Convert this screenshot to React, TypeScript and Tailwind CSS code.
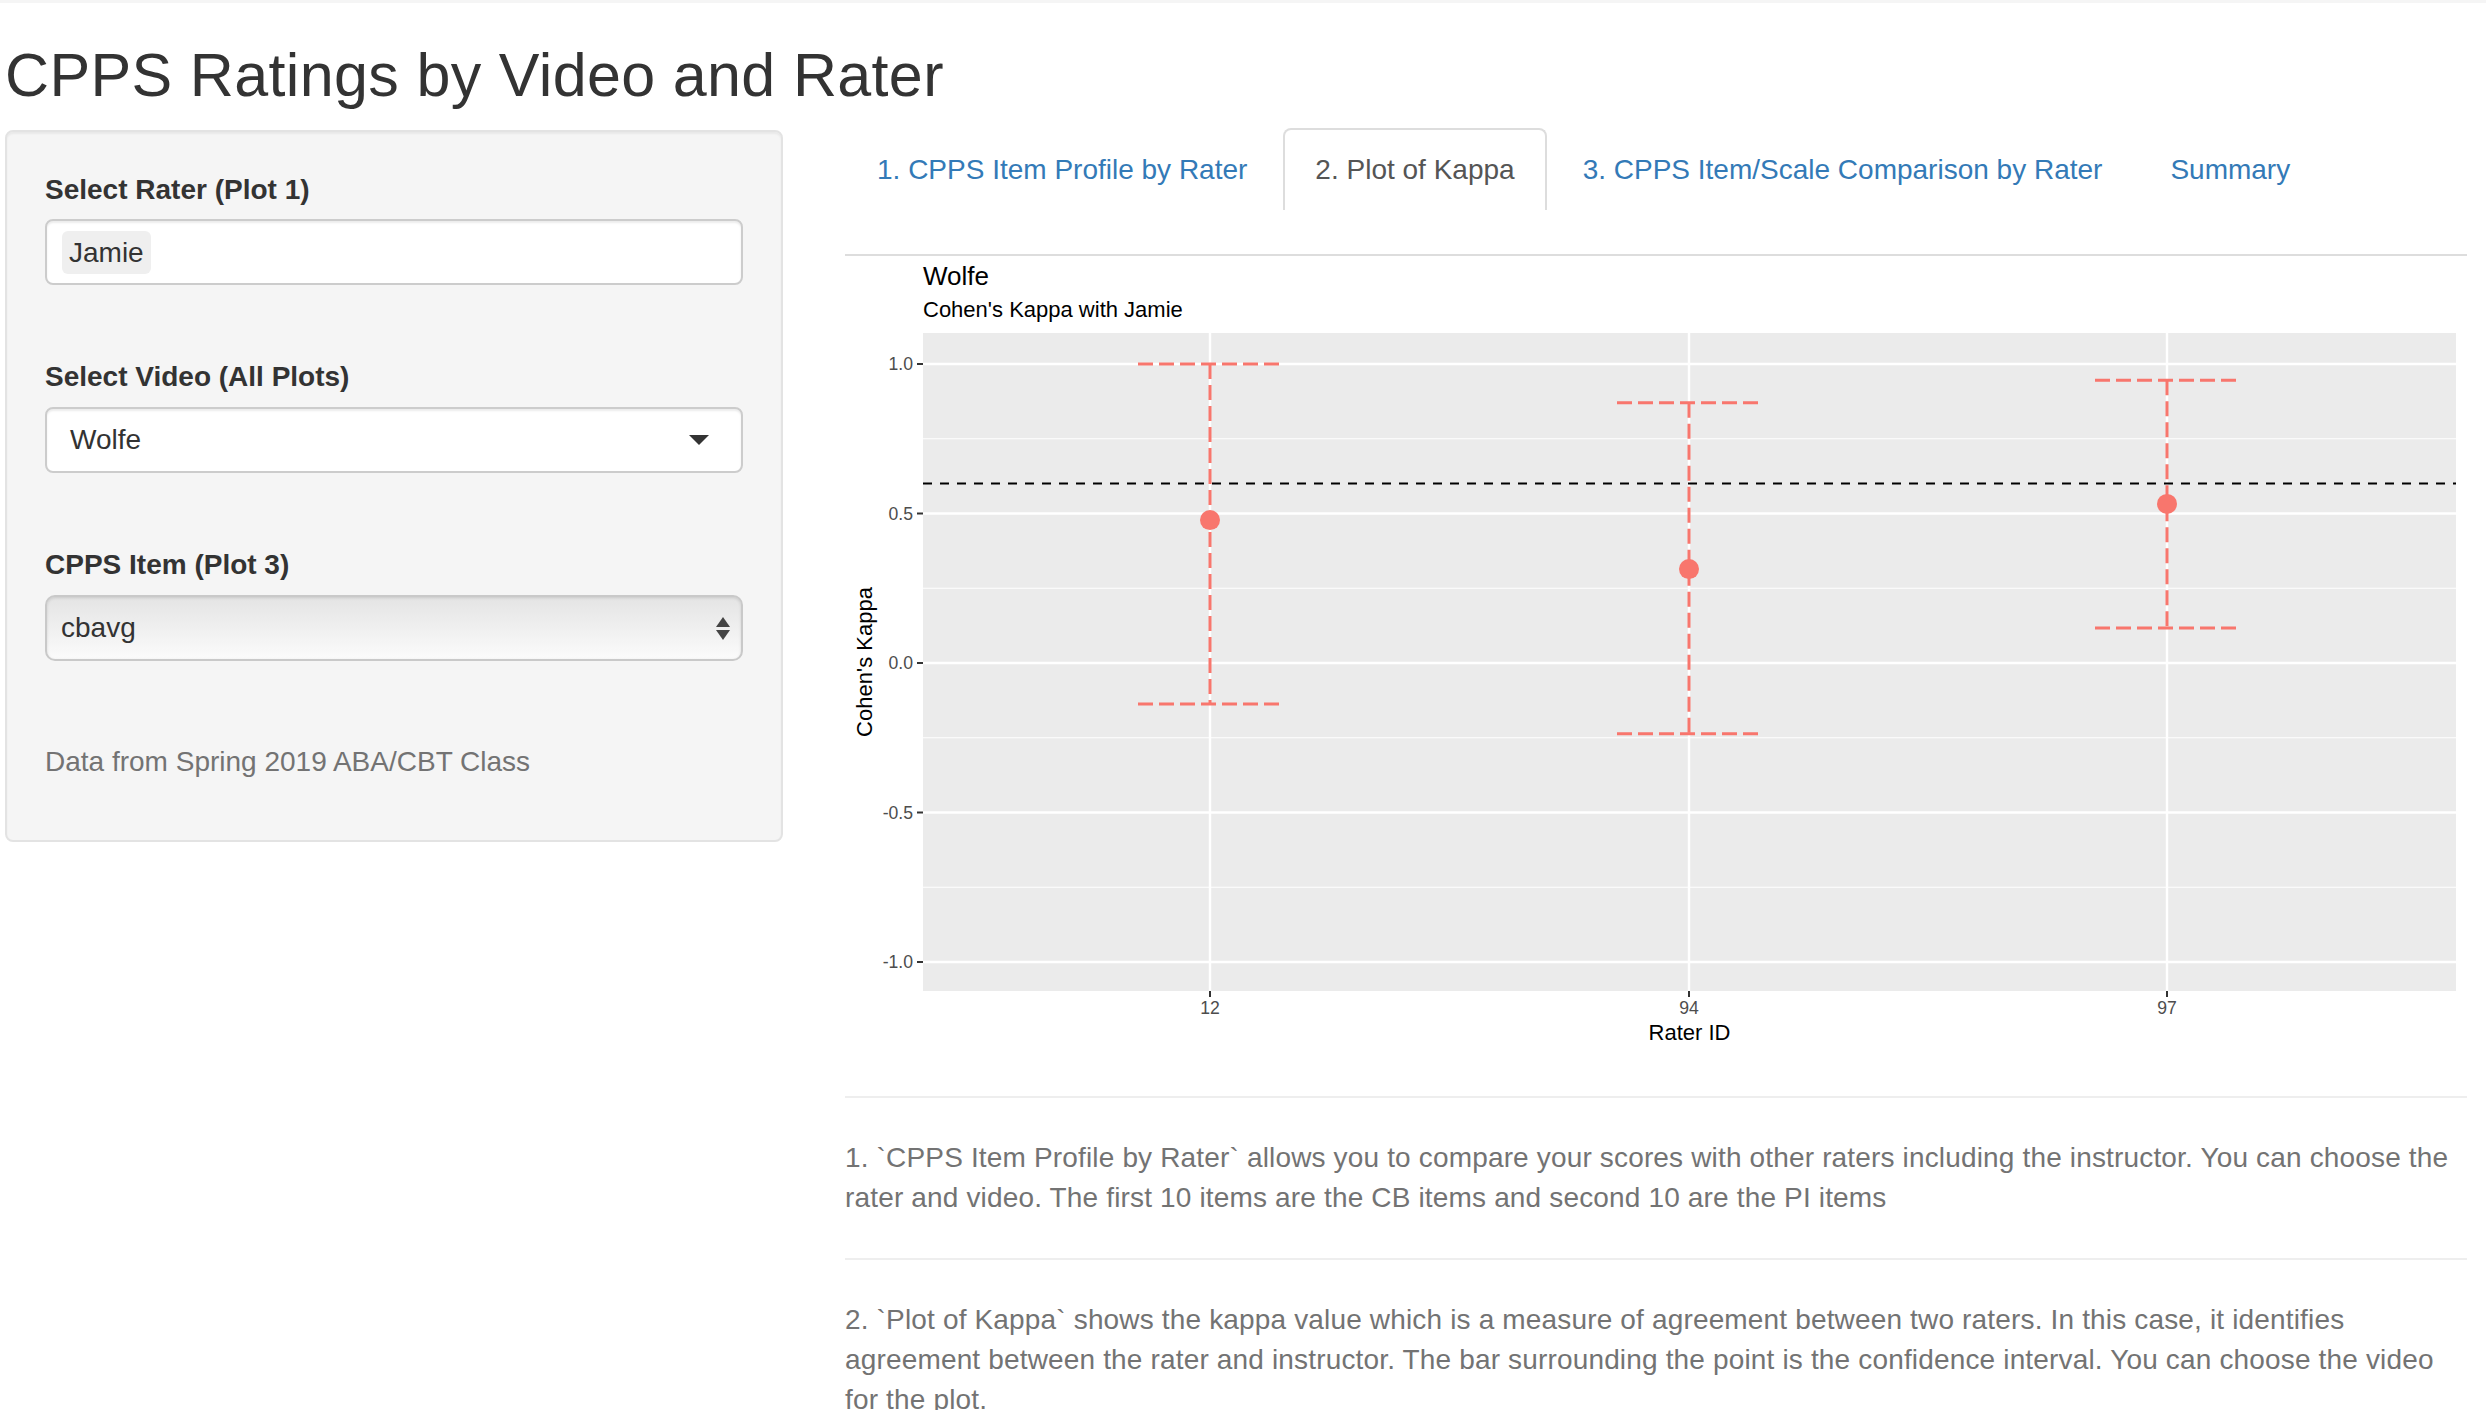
const RED = "#F8766D";

// kappa per rater, with confidence interval
const raters = [
  { id: "12", x: 365, lo: -0.137, est: 0.478, hi: 1.0 },
  { id: "94", x: 844, lo: -0.237, est: 0.314, hi: 0.87 },
  { id: "97", x: 1322, lo: 0.117, est: 0.532, hi: 0.946 },
];

const yv = (v: number) => 405 - 299 * v;
const FONT = "Liberation Sans, Arial, sans-serif";

function KappaPlot() {
  const left = 78;
  const right = 1611;
  const major = [1, 0.5, 0, -0.5, -1];
  const minor = [0.75, 0.25, -0.25, -0.75];
  return (
    <svg width="1622" height="800" viewBox="0 0 1622 800" className="block">
      <text x={left} y={27} fontSize="26" fontFamily={FONT} fill="#000">
        Wolfe
      </text>
      <text x={left} y={59} fontSize="22" fontFamily={FONT} fill="#000">
        Cohen's Kappa with Jamie
      </text>
      <rect x={left} y={75} width={right - left} height={658} fill="#ebebeb" />
      {minor.map((v) => (
        <line key={"mi" + v} x1={left} x2={right} y1={yv(v)} y2={yv(v)} stroke="#fff" strokeWidth="1.2" />
      ))}
      {major.map((v) => (
        <line key={"ma" + v} x1={left} x2={right} y1={yv(v)} y2={yv(v)} stroke="#fff" strokeWidth="2.4" />
      ))}
      {raters.map((r) => (
        <line key={"v" + r.id} x1={r.x} x2={r.x} y1={75} y2={733} stroke="#fff" strokeWidth="2.4" />
      ))}
      <line x1={left} x2={right} y1={yv(0.6)} y2={yv(0.6)} stroke="#000" strokeWidth="2" strokeDasharray="9 8" />
      {raters.map((r) => (
        <g key={"e" + r.id} stroke={RED} strokeWidth="3" strokeDasharray="15 6" fill="none">
          <line x1={r.x - 72} x2={r.x + 72} y1={yv(r.hi)} y2={yv(r.hi)} />
          <line x1={r.x - 72} x2={r.x + 72} y1={yv(r.lo)} y2={yv(r.lo)} />
          <line x1={r.x} x2={r.x} y1={yv(r.hi)} y2={yv(r.lo)} />
        </g>
      ))}
      {raters.map((r) => (
        <circle key={"p" + r.id} cx={r.x} cy={yv(r.est)} r="10" fill={RED} />
      ))}
      {major.map((v) => (
        <g key={"t" + v}>
          <line x1={72} x2={78} y1={yv(v)} y2={yv(v)} stroke="#333" strokeWidth="2" />
          <text x={68} y={yv(v) + 6} textAnchor="end" fontSize="17.6" fontFamily={FONT} fill="#4d4d4d">
            {v.toFixed(1)}
          </text>
        </g>
      ))}
      {raters.map((r) => (
        <g key={"xt" + r.id}>
          <line x1={r.x} x2={r.x} y1={733} y2={739} stroke="#333" strokeWidth="2" />
          <text x={r.x} y={756} textAnchor="middle" fontSize="17.6" fontFamily={FONT} fill="#4d4d4d">
            {r.id}
          </text>
        </g>
      ))}
      <text x={(left + right) / 2} y={782} textAnchor="middle" fontSize="22" fontFamily={FONT} fill="#000">
        Rater ID
      </text>
      <text
        x={27}
        y={404}
        textAnchor="middle"
        fontSize="22"
        fontFamily={FONT}
        fill="#000"
        transform="rotate(-90 27 404)"
      >
        Cohen's Kappa
      </text>
    </svg>
  );
}

function Sidebar() {
  return (
    <div className="mt-[2px] w-[778px] shrink-0 rounded-[8px] border-2 border-[#e3e3e3] bg-[#f5f5f5] p-[38px] shadow-[inset_0_2px_2px_rgba(0,0,0,0.05)]">
      <div className="mb-[9px] text-[28px] font-bold leading-[40px] text-[#333]">Select Rater (Plot 1)</div>
      <div className="flex h-[66px] items-center rounded-[8px] border-2 border-[#cccccc] bg-white pl-[15px] shadow-[inset_0_2px_2px_rgba(0,0,0,0.08)]">
        <span className="rounded-[6px] bg-[#efefef] px-[7px] text-[28px] leading-[43px] text-[#333]">Jamie</span>
      </div>

      <div className="mb-[10px] mt-[72px] text-[28px] font-bold leading-[40px] text-[#333]">Select Video (All Plots)</div>
      <div className="flex h-[66px] items-center justify-between rounded-[8px] border-2 border-[#cccccc] bg-white pl-[23px] pr-[32px] shadow-[inset_0_2px_2px_rgba(0,0,0,0.08)]">
        <span className="text-[28px] leading-[40px] text-[#333]">Wolfe</span>
        <span className="h-0 w-0 border-x-[10px] border-t-[10px] border-x-transparent border-t-[#333]" />
      </div>

      <div className="mb-[10px] mt-[72px] text-[28px] font-bold leading-[40px] text-[#333]">CPPS Item (Plot 3)</div>
      <div className="flex h-[66px] items-center justify-between rounded-[10px] border-2 border-[#c9c9c9] bg-gradient-to-b from-[#e4e4e4] to-[#fbfbfb] pl-[14px] pr-[11px] shadow-[inset_0_1px_3px_rgba(0,0,0,0.12)]">
        <span className="text-[28px] leading-[40px] text-[#333]">cbavg</span>
        <span className="flex flex-col items-center gap-[3px]">
          <span className="h-0 w-0 border-x-[7px] border-b-[10px] border-x-transparent border-b-[#444]" />
          <span className="h-0 w-0 border-x-[7px] border-t-[10px] border-x-transparent border-t-[#444]" />
        </span>
      </div>

      <p className="mb-[20px] mt-[81px] text-[28px] leading-[40px] text-[#737373]">Data from Spring 2019 ABA/CBT Class</p>
    </div>
  );
}

const tabs = [
  "1. CPPS Item Profile by Rater",
  "2. Plot of Kappa",
  "3. CPPS Item/Scale Comparison by Rater",
  "Summary",
];

function Tabs() {
  return (
    <ul className="flex">
      {tabs.map((t, i) =>
        i === 1 ? (
          <li
            key={t}
            className="mr-[4px] rounded-t-[8px] border-2 border-b-0 border-[#dddddd] bg-white px-[30px] py-[20px] text-[28px] leading-[40px] text-[#555]"
          >
            {t}
          </li>
        ) : (
          <li
            key={t}
            className="mr-[4px] border-2 border-b-0 border-transparent px-[30px] py-[20px] text-[28px] leading-[40px] text-[#337ab7]"
          >
            {t}
          </li>
        )
      )}
    </ul>
  );
}

export default function App() {
  return (
    <div className="h-[1410px] overflow-hidden bg-white font-['Liberation_Sans',Arial,sans-serif] text-[#333]">
      <div className="h-[3px] bg-[#f5f5f5]" />
      <div className="pl-[5px] pr-[19px]">
        <h2 className="mb-[20px] mt-[39px] text-[61px] font-normal leading-[66px] tracking-[0.35px] text-[#333]">
          CPPS Ratings by Video and Rater
        </h2>
        <div className="flex items-start gap-[62px]">
          <Sidebar />
          <div className="min-w-0 flex-1">
            <Tabs />
            <div className="mt-[44px] h-[2px] bg-[#dddddd]" />
            <div className="mt-[2px]">
              <KappaPlot />
            </div>
            <div className="mt-[38px] h-[2px] bg-[#eeeeee]" />
            <p className="mt-[40px] text-[28px] leading-[40px] tracking-[0.16px] text-[#737373]">
              1. `CPPS Item Profile by Rater` allows you to compare your scores with other raters including the
              instructor. You can choose the rater and video. The first 10 items are the CB items and second 10 are
              the PI items
            </p>
            <div className="mt-[40px] h-[2px] bg-[#eeeeee]" />
            <p className="mt-[40px] text-[28px] leading-[40px] tracking-[0.16px] text-[#737373]">
              2. `Plot of Kappa` shows the kappa value which is a measure of agreement between two raters. In this
              case, it identifies agreement between the rater and instructor. The bar surrounding the point is the
              confidence interval. You can choose the video for the plot.
            </p>
          </div>
        </div>
      </div>
    </div>
  );
}
